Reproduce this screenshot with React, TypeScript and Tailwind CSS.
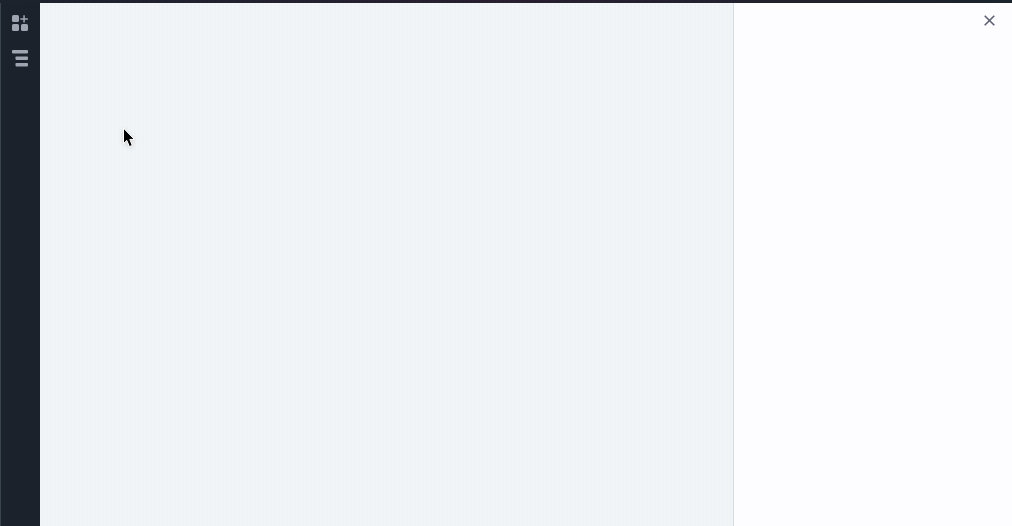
import React, { useState } from "react";

function BlocksIcon() {
  return (
    <svg width="16" height="16" viewBox="0 0 16 16" fill="currentColor">
      <rect x="0" y="0" width="7" height="7" rx="1.6" />
      <rect x="0" y="9" width="7" height="7" rx="1.6" />
      <rect x="9" y="9" width="7" height="7" rx="1.6" />
      <path d="M11.3 0.3h1.5v2.9h3v1.5h-3v2.9h-1.5V4.7h-3V3.2h3z" />
    </svg>
  );
}

function LayersIcon() {
  return (
    <svg width="16" height="17" viewBox="0 0 16 17" fill="currentColor">
      <rect x="0" y="0" width="16" height="3.4" rx="0.8" />
      <rect x="3.5" y="6.5" width="12.5" height="3.4" rx="0.8" />
      <rect x="3.5" y="13" width="12.5" height="3.4" rx="0.8" />
    </svg>
  );
}

function Pointer() {
  return (
    <svg
      className="absolute top-[123px] left-[82px] drop-shadow-sm"
      width="14"
      height="22"
      viewBox="0 0 14 22"
    >
      <path
        d="M1.5 2.2v15.4l3.3-3.2 2.6 6.2 2.9-1.2-2.5-6h4.6z"
        fill="#000"
        stroke="#fff"
        strokeWidth="1"
      />
    </svg>
  );
}

function App() {
  const [showPanel, setShowPanel] = useState(true);

  return (
    <div className="flex h-screen flex-col bg-[#1b222c] font-['Inter',sans-serif]">
      <header className="h-[3px] shrink-0 bg-linear-to-r from-[#1b232c] via-[#281f30] to-[#1b232c]" />
      <div className="flex min-h-0 flex-1">
        <nav className="flex w-10 shrink-0 flex-col items-start gap-[19px] border-l border-[#3a444b] pt-3 pl-[11px] text-[#a0a5b2]">
          <button type="button" aria-label="Add block">
            <BlocksIcon />
          </button>
          <button type="button" aria-label="Layers">
            <LayersIcon />
          </button>
        </nav>
        <main className="relative flex-1 bg-[repeating-linear-gradient(90deg,#f2f5f7_0px,#f2f5f7_2px,#eff3f5_2px,#eff3f5_4px)]">
          <Pointer />
        </main>
        {showPanel && (
          <aside className="flex w-[279px] shrink-0 items-start justify-end border-l border-[#d5dce3] bg-[#fdfcfe] px-4 pt-[11px]">
            <button
              type="button"
              aria-label="Close"
              className="text-[#5c6073]"
              onClick={() => setShowPanel(false)}
            >
              <svg
                width="13"
                height="13"
                viewBox="0 0 13 13"
                stroke="currentColor"
                strokeWidth="1.6"
              >
                <path d="M1.7 1.7l9.6 9.6M11.3 1.7L1.7 11.3" />
              </svg>
            </button>
          </aside>
        )}
      </div>
    </div>
  );
}

export default App;
